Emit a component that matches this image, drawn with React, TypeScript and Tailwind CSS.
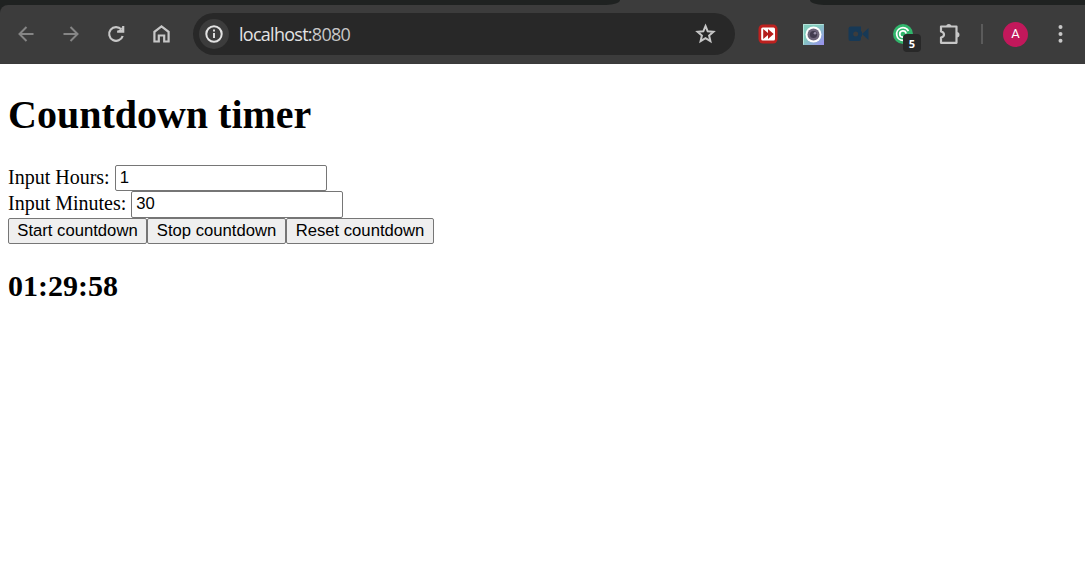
import React, { useState } from 'react';

const BackIcon = () => (
  <svg className="h-5 w-5" viewBox="0 0 20 20" fill="none" stroke="#858585" strokeWidth="2">
    <path d="M17.500 10H3.500M10.500 3 3.500 10l7 7" />
  </svg>
);

const ForwardIcon = () => (
  <svg className="h-5 w-5" viewBox="0 0 20 20" fill="none" stroke="#858585" strokeWidth="2">
    <path d="M2.500 10h14M9.500 3l7 7-7 7" />
  </svg>
);

const ReloadIcon = () => (
  <svg className="h-5 w-5" viewBox="0 0 20 20" fill="none" stroke="#c7c7c7" strokeWidth="2.200">
    <path d="M15.300 5.400A6.900 6.900 0 1 0 16.700 12" />
    <path d="M17.200 2v5.600h-6.100M12.500 7h4V3.500" />
  </svg>
);

const HomeIcon = () => (
  <svg className="h-5 w-5" viewBox="0 0 20 20" fill="none" stroke="#c7c7c7" strokeWidth="2.200">
    <path d="M3.400 17.500V7.800L10.500 2.300l7.100 5.500v9.700h-4.400v-6h-5.400v6Z" />
  </svg>
);

const InfoIcon = () => (
  <svg className="h-5 w-5" viewBox="0 0 20 20" fill="none" stroke="#e3e3e3" strokeWidth="2">
    <circle cx="10" cy="10" r="7.700" />
    <path d="M10 9v5M10 5.600v2" strokeWidth="1.900" />
  </svg>
);

const StarIcon = () => (
  <svg className="h-[22px] w-[22px]" viewBox="0 0 22 22" fill="none" stroke="#c7c7c7" strokeWidth="2">
    <path d="m10.500 3 2.200 5.300 5.700.5-4.300 3.700 1.300 5.600-4.900-3-4.900 3 1.300-5.600-4.300-3.700 5.700-.5Z" />
  </svg>
);

const FastForwardBadge = () => (
  <svg className="h-5 w-5" viewBox="0 0 20 20">
    <rect x=".5" y=".5" width="19" height="19" rx="4.500" fill="#bd211f" />
    <rect x="3.200" y="3.500" width="13.800" height="13" rx="1.500" fill="#fff" />
    <path d="M5.200 5 10 9.100V5l5.700 5-5.700 5v-4.100L5.200 15Z" fill="#b51d1c" />
  </svg>
);

const CameraBadge = () => (
  <svg className="h-[21px] w-[21px]" viewBox="0 0 21 21">
    <defs>
      <linearGradient id="lens-bg" x1="0" y1="0" x2="1" y2="1">
        <stop offset=".4" stopColor="#82cbbd" />
        <stop offset="1" stopColor="#9b8df0" />
      </linearGradient>
    </defs>
    <rect width="21" height="21" fill="url(#lens-bg)" />
    <path d="M.5 20.500V.5h20" fill="none" stroke="#b4e3d9" />
    <circle cx="10.500" cy="10.500" r="8" fill="#fff" />
    <circle cx="10.500" cy="10.500" r="6" fill="#6f667b" />
    <circle cx="10.500" cy="10.500" r="3.600" fill="#433c50" />
    <circle cx="12" cy="9.300" r="1.300" fill="#9990a8" />
  </svg>
);

const VideoBadge = () => (
  <svg className="h-5 w-[21px]" viewBox="0 0 21 20">
    <path d="M3 2.500h10v5h1v5h-1V15q0 2-2 2H2.500Q.5 17 .5 15V5Q.5 2.500 3 2.500M14 10l6.500-6v12Z" fill="#173956" />
    <circle cx="7.700" cy="10" r="2.500" fill="#3c3c3c" />
  </svg>
);

const TargetBadge = () => (
  <svg className="h-5 w-5" viewBox="0 0 20 20">
    <circle cx="10" cy="10" r="10" fill="#31b66c" />
    <g fill="none" stroke="#fff" strokeWidth="1.700">
      <path d="M15.500 7A6.300 6.300 0 1 0 10 16.300" />
      <path d="M13.100 9.500A3.200 3.200 0 1 0 10 13.200" />
    </g>
  </svg>
);

const PuzzleIcon = () => (
  <svg className="h-[23px] w-[23px]" viewBox="0 0 23 23" fill="none">
    <path d="M4 3.500h14.500v16.300H3v-5.300q3-.7 3-3T3 8.500v-5Z" stroke="#c7c7c7" strokeWidth="2.200" strokeLinejoin="round" />
    <path d="M8.200 3.500a2.600 2.600 0 0 1 5.200 0ZM18.800 9a2.700 2.700 0 0 1 0 5.400Z" fill="#c7c7c7" />
  </svg>
);

const MenuIcon = () => (
  <svg className="h-5 w-2" viewBox="0 0 8 20" fill="#c7c7c7">
    <circle cx="3.500" cy="3" r="2" />
    <circle cx="3.500" cy="10" r="2" />
    <circle cx="3.500" cy="16.800" r="2" />
  </svg>
);

function BrowserBar() {
  return (
    <header className="h-16 bg-[#3c3c3c]">
      <div className="flex h-[5px] justify-between">
        <div className="w-[620px] rounded-br-[14px_5px] bg-[#1f2221]" />
        <div className="w-[275px] rounded-bl-[14px_5px] bg-[#1f2221]" />
      </div>
      <div className="bg-[linear-gradient(to_right,#1f2221_10px,#3c3c3c_10px)]">
        <div className="flex h-[59px] items-center rounded-tl-[8px] border-b border-[#3a3a3a] bg-[#3c3c3c] pl-[15.500px]">
          <div className="flex w-[177.500px] gap-[25px]">
            <BackIcon />
            <ForwardIcon />
            <ReloadIcon />
            <HomeIcon />
          </div>
          <div className="flex h-[42px] w-[542px] items-center rounded-full bg-[#282828] pl-1.5 pr-[18px]">
            <div className="flex h-[30px] w-[30px] items-center justify-center rounded-full bg-[#3c3c3c]">
              <InfoIcon />
            </div>
            <div className="ml-2.5 flex-1 font-['Open_Sans','Noto_Sans',sans-serif] text-[18px] leading-6 tracking-[-0.73px] text-[#e3e3e3]">
              localhost:<span className="text-[#c7c7c7]">8080</span>
            </div>
            <StarIcon />
          </div>
          <div className="ml-[23px] flex items-center">
            <FastForwardBadge />
            <div className="ml-[25px]"><CameraBadge /></div>
            <div className="ml-6"><VideoBadge /></div>
            <div className="relative ml-6">
              <TargetBadge />
              <span className="absolute left-[10px] top-[10px] flex h-[18px] w-[18px] items-center justify-center rounded-[4px] bg-[#282828] font-['Open_Sans',sans-serif] text-[11px] font-bold leading-none text-white">5</span>
            </div>
            <div className="ml-[25px]"><PuzzleIcon /></div>
            <div className="ml-5 h-5 w-0.5 bg-[#5b5b5b]" />
            <div className="ml-5 flex h-[25px] w-[25px] items-center justify-center rounded-full bg-[#c2185b] font-['Roboto',sans-serif] text-[13px] text-white">A</div>
            <div className="ml-[29px]"><MenuIcon /></div>
          </div>
        </div>
      </div>
    </header>
  );
}

type FieldProps = { label: string; value: string; className: string; onChange: (value: string) => void };

const Field = ({ label, value, className, onChange }: FieldProps) => (
  <label className="flex items-start gap-[5px] text-[20px] leading-6">
    <span>{label}</span>
    <input
      className={`w-[212px] rounded-[2px] border border-[#767676] bg-white px-1 font-['Liberation_Sans',sans-serif] text-[16.667px] leading-6 outline-none ${className}`}
      value={value}
      onChange={(event) => onChange(event.target.value)}
    />
  </label>
);

const Action = ({ children, className }: { children: string; className: string }) => (
  <button className={`h-[26px] whitespace-nowrap rounded-[2px] border border-[#767676] bg-[#efefef] text-center font-['Liberation_Sans',sans-serif] text-[16.667px] leading-6 ${className}`}>
    {children}
  </button>
);

export default function App() {
  const [hours, setHours] = useState('1');
  const [minutes, setMinutes] = useState('30');

  return (
    <div className="h-[568px] overflow-hidden bg-white text-black">
      <BrowserBar />
      <main className="px-2 pt-7 font-['Liberation_Serif',serif]">
        <h1 className="text-[40px] font-bold leading-[46px]">Countdown timer</h1>
        <div className="mt-[27px]">
          <Field label="Input Hours:" value={hours} onChange={setHours} className="h-[26px]" />
          <Field label="Input Minutes:" value={minutes} onChange={setMinutes} className="h-[27px] pb-px" />
        </div>
        <div className="flex">
          <Action className="w-[139px]">Start countdown</Action>
          <Action className="w-[139px]">Stop countdown</Action>
          <Action className="w-[148px]">Reset countdown</Action>
        </div>
        <h2 className="mt-[25px] text-[30px] font-bold leading-[34px]">01:29:58</h2>
      </main>
    </div>
  );
}
